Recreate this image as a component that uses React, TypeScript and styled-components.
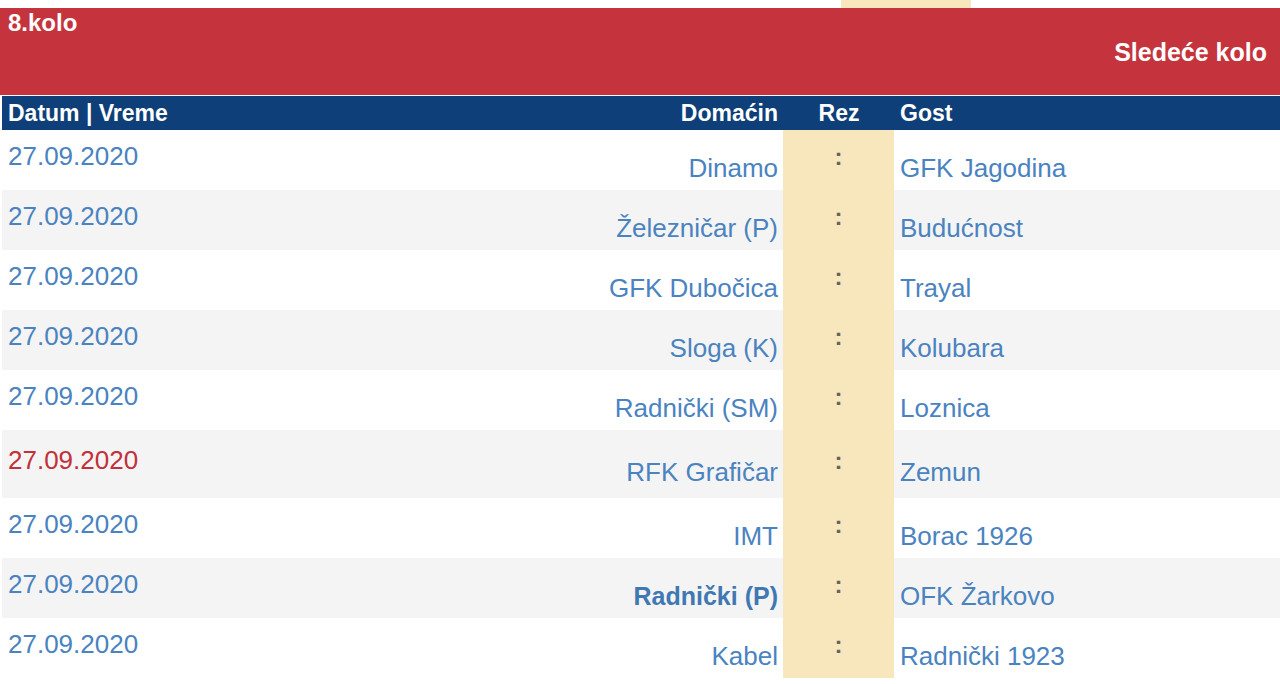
import React from "react";
import styled, { createGlobalStyle, css } from "styled-components";

type Match = {
  date: string
  home: string
  away: string
  live?: boolean
  featured?: boolean
  tall?: boolean
}

const matches: Match[] = [
  { date: '27.09.2020', home: 'Dinamo', away: 'GFK Jagodina' },
  { date: '27.09.2020', home: 'Železničar (P)', away: 'Budućnost' },
  { date: '27.09.2020', home: 'GFK Dubočica', away: 'Trayal' },
  { date: '27.09.2020', home: 'Sloga (K)', away: 'Kolubara' },
  { date: '27.09.2020', home: 'Radnički (SM)', away: 'Loznica' },
  { date: '27.09.2020', home: 'RFK Grafičar', away: 'Zemun', live: true, tall: true },
  { date: '27.09.2020', home: 'IMT', away: 'Borac 1926' },
  { date: '27.09.2020', home: 'Radnički (P)', away: 'OFK Žarkovo', featured: true },
  { date: '27.09.2020', home: 'Kabel', away: 'Radnički 1923' },
]

const GlobalStyle = createGlobalStyle`
  html, body {
    margin: 0;
    padding: 0;
    background: #fff;
    font-family: "Liberation Sans", Arial, sans-serif;
  }
`

export default function App() {
  return <Page>
    <GlobalStyle />
    <TopStrip>
      <TopCell />
    </TopStrip>
    <RoundHeader>
      <RoundTitle>8.kolo</RoundTitle>
      <NextRound>Sledeće kolo</NextRound>
    </RoundHeader>
    <Table>
      <HeadRow>
        <HeadCell>Datum | Vreme</HeadCell>
        <HeadCell $align="right">Domaćin</HeadCell>
        <HeadCell $align="center">Rez</HeadCell>
        <HeadCell>Gost</HeadCell>
      </HeadRow>
      <Body>
        {matches.map((m, i) => (
          <Row key={i} $odd={i % 2 === 1} $tall={m.tall}>
            <DateCell $live={m.live}>{m.date}</DateCell>
            <HomeCell $bold={m.featured}>{m.home}</HomeCell>
            <ScoreCell>:</ScoreCell>
            <AwayCell>{m.away}</AwayCell>
          </Row>
        ))}
      </Body>
    </Table>
  </Page>
}

const Page = styled.div`
  width: 1280px;
  min-height: 684px;
  background: #fff;
`

const TopStrip = styled.div`
  height: 8px;
  display: flex;
  padding-left: 841px;
`

const TopCell = styled.div`
  width: 130px;
  background: #f8e6bd;
`

const RoundHeader = styled.div`
  height: 87px;
  box-sizing: border-box;
  background: #c5343d;
  color: #fff;
  font-weight: bold;
  font-size: 25px;
  line-height: 28px;
  padding: 1px 13px 0 8px;
  display: flex;
  flex-direction: column;
`

const RoundTitle = styled.div`
  font-size: 24px;
`

const NextRound = styled.div`
  align-self: flex-end;
  margin-top: 1px;
`

const Table = styled.div`
  margin: 1px 0 0 2px;
  display: flex;
  flex-direction: column;
`

const columns = `390px 391px 111px 1fr`

const HeadRow = styled.div`
  display: grid;
  grid-template-columns: ${columns};
  height: 34px;
  background: #0f3f78;
  align-items: center;
`

const HeadCell = styled.div<{ $align?: string }>`
  color: #fff;
  font-weight: bold;
  font-size: 23px;
  line-height: 26px;
  padding: 0 5px 0 6px;
  text-align: ${p => p.$align || 'left'};
`

const Body = styled.div`
  display: flex;
  flex-direction: column;
  padding-bottom: 6px;
`

const DateCell = styled.div<{ $live?: boolean }>`
  padding: 12px 6px 0;
  color: ${p => p.$live ? '#c23039' : '#4a83bf'};
`

const HomeCell = styled.div<{ $bold?: boolean }>`
  align-self: end;
  padding: 0 5px 7px 6px;
  text-align: right;
  font-weight: ${p => p.$bold ? 'bold' : 'normal'};
  color: ${p => p.$bold ? '#3f78b3' : '#4a83bf'};
  font-size: ${p => p.$bold ? '25px' : '26px'};
`

const ScoreCell = styled.div`
  background: #f8e6bd;
  text-align: center;
  padding-top: 12px;
  color: #66665e;
  font-weight: bold;
  font-size: 24px;
`

const AwayCell = styled.div`
  align-self: end;
  padding: 0 6px 7px 6px;
`

// the live match row is a little taller, with its content pushed in by 4px
const Row = styled.div<{ $odd?: boolean, $tall?: boolean }>`
  display: grid;
  grid-template-columns: ${columns};
  height: ${p => p.$tall ? 68 : 60}px;
  background: ${p => p.$odd ? '#f4f4f4' : '#fff'};
  font-size: 26px;
  line-height: 29px;
  color: #4a83bf;

  ${p => p.$tall && css`
    ${DateCell}, ${ScoreCell} {
      padding-top: 16px;
    }
    ${HomeCell}, ${AwayCell} {
      padding-bottom: 11px;
    }
  `}
`
